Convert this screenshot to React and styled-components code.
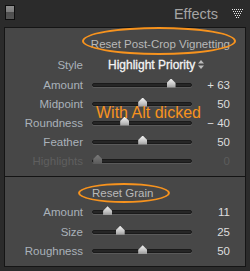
import styled, { createGlobalStyle } from "styled-components";

const GlobalStyle = createGlobalStyle`
  html, body {
    margin: 0;
    padding: 0;
    background: #2b2b2b;
  }
  body {
    font-family: "Liberation Sans", Arial, sans-serif;
  }
`;

const ORANGE = "#f7931e";

const Page = styled.div`
  width: 250px;
  height: 271px;
  background: #2b2b2b;
  display: flex;
  flex-direction: column;
  overflow: hidden;
`;

const Header = styled.div`
  height: 27px;
  display: flex;
  align-items: flex-start;
  padding: 0 7px 0 5px;
  box-sizing: border-box;
`;

const SoloIcon = styled.div`
  width: 8px;
  height: 13px;
  margin-top: 5px;
  border: 1px solid #0e0e0e;
  background: linear-gradient(#8d8d8d 0, #7a7a7a 50%, #4e4e4e 50%, #555 100%);
`;

const Title = styled.div`
  margin-left: auto;
  margin-right: 14px;
  margin-top: 6px;
  font-size: 14.5px;
  line-height: 17px;
  color: #a4a4a4;
`;

const Collapse = styled.svg`
  margin-top: 9px;
  display: block;
`;

const Panel = styled.div`
  margin: 0 4px;
  height: 240px;
  box-sizing: border-box;
  border: 1px solid #151515;
  background: #474747;
  display: flex;
  flex-direction: column;
`;

const Section = styled.div`
  position: relative;
  padding: ${(p) => p.$pad};
  border-top: ${(p) => (p.$divided ? "1px solid #141414" : "none")};
`;

const Row = styled.div`
  display: grid;
  grid-template-columns: 78px 100px 29px;
  column-gap: 9px;
  align-items: center;
  height: ${(p) => p.$h || 19}px;
  font-size: 11.5px;
`;

const Label = styled.div`
  text-align: right;
  color: ${(p) => (p.$dim ? "#5f5f5f" : "#aab2ba")};
  white-space: nowrap;
`;

const Value = styled.div`
  text-align: right;
  color: ${(p) => (p.$dim ? "#5c5c5c" : "#dedede")};
  white-space: nowrap;
`;

const ResetCell = styled.div`
  grid-column: ${(p) => p.$span};
  display: flex;
  justify-content: ${(p) => p.$justify};
`;

const ResetButton = styled.span`
  position: relative;
  color: #b9b9b9;
  white-space: nowrap;
  line-height: 20px;
  &::after {
    content: "";
    position: absolute;
    top: ${(p) => p.$ring.top}px;
    height: ${(p) => p.$ring.h}px;
    left: ${(p) => p.$ring.left}px;
    right: ${(p) => p.$ring.right}px;
    border: 2px solid ${ORANGE};
    border-radius: 50%;
    box-sizing: border-box;
  }
`;

const Select = styled.div`
  grid-column: 2 / 4;
  padding-left: 16px;
  color: #f4f4f4;
  font-size: 12px;
  -webkit-text-stroke: 0.3px #f4f4f4;
  white-space: nowrap;
  display: flex;
  align-items: center;
  gap: 3px;
`;

const Track = styled.div`
  position: relative;
  height: 4px;
  border-radius: 2px;
  background: #262626;
  border: 1px solid #1a1a1a;
  box-shadow: 0 1px 0 #5a5a5a;
  box-sizing: border-box;
`;

const Thumb = styled.div`
  position: absolute;
  top: -5px;
  width: 9px;
  height: 9px;
  margin-left: -4.5px;
  clip-path: polygon(50% 0, 100% 50%, 100% 100%, 0 100%, 0 50%);
  background: ${(p) =>
    p.$dim
      ? "linear-gradient(#7a7a7a, #5a5a5a)"
      : "linear-gradient(#f2f2f2, #c4c4c4 60%, #9a9a9a)"};
`;

const Note = styled.div`
  position: absolute;
  left: 91px;
  top: 77px;
  font-size: 16px;
  line-height: 16px;
  color: ${ORANGE};
  white-space: nowrap;
  pointer-events: none;
`;

const vignette = [
  { label: "Amount", value: "+ 63", frac: 0.815 },
  { label: "Midpoint", value: "50", frac: 0.5 },
  { label: "Roundness", value: "\u2212 40", frac: 0.3 },
  { label: "Feather", value: "50", frac: 0.5 },
  { label: "Highlights", value: "0", frac: 0, dim: true },
];

const grain = [
  { label: "Amount", value: "11", frac: 0.11 },
  { label: "Size", value: "25", frac: 0.25 },
  { label: "Roughness", value: "50", frac: 0.5 },
];

const SliderRow = ({ label, value, frac, dim, h }) => (
  <Row $h={h}>
    <Label $dim={dim}>{label}</Label>
    <Track>
      <Thumb $dim={dim} style={{ left: `${4.7 + frac * 90}px` }} />
    </Track>
    <Value $dim={dim}>{value}</Value>
  </Row>
);

const CollapseIcon = () => {
  const dots = [];
  const rows = [6, 5, 4, 3, 2];
  rows.forEach((n, r) => {
    for (let i = 0; i < n; i++) {
      dots.push(<rect key={`${r}-${i}`} x={r + i * 2} y={r * 2} width="1" height="1" fill="#e8e8e8" />);
    }
  });
  return (
    <Collapse width="11" height="10" viewBox="0 0 11 10">
      {dots}
    </Collapse>
  );
};

export default function App() {
  return (
    <Page>
      <GlobalStyle />
      <Header>
        <SoloIcon />
        <Title>Effects</Title>
        <CollapseIcon />
      </Header>
      <Panel>
        <Section $pad="6px 15px 6px 0">
          <Row $h={20}>
            <ResetCell $span="1 / 4" $justify="flex-end">
              <ResetButton $ring={{ top: -7, h: 28, left: -9, right: -6 }}>
                Reset Post-Crop Vignetting
              </ResetButton>
            </ResetCell>
          </Row>
          <Row $h={21}>
            <Label>Style</Label>
            <Select>
              Highlight Priority
              <svg width="6" height="9" viewBox="0 0 6 9">
                <path d="M0 3.5 L3 0 L6 3.5 Z M0 5.5 L3 9 L6 5.5 Z" fill="#bdbdbd" />
              </svg>
            </Select>
          </Row>
          {vignette.map((s) => (
            <SliderRow key={s.label} {...s} />
          ))}
          <Note>With Alt dicked</Note>
        </Section>
        <Section $divided $pad="6px 15px 4px 0">
          <Row $h={19.5}>
            <ResetCell $span="2 / 4" $justify="flex-start">
              <ResetButton $ring={{ top: 0, h: 20, left: -14, right: -17 }}>
                Reset Grain
              </ResetButton>
            </ResetCell>
          </Row>
          {grain.map((s) => (
            <SliderRow key={s.label} {...s} h={19.5} />
          ))}
        </Section>
      </Panel>
    </Page>
  );
}
